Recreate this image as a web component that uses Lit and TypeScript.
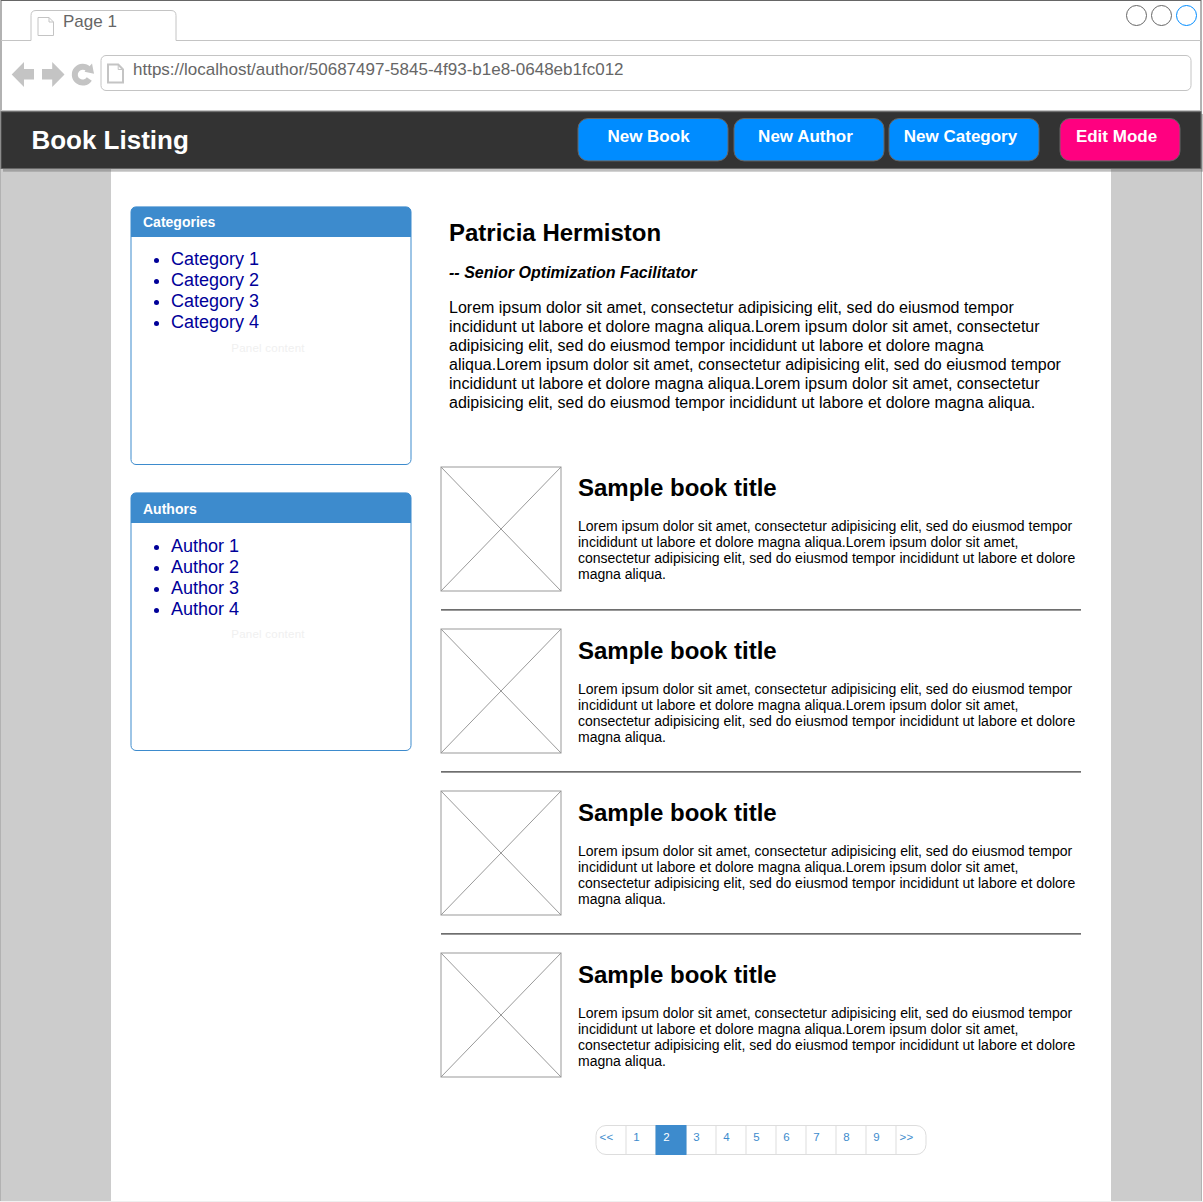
import { LitElement, html, css, svg } from "lit";
import { customElement, property } from "lit/decorators.js";

const LOREM = "Lorem ipsum dolor sit amet, consectetur adipisicing elit, sed do eiusmod tempor incididunt ut labore et dolore magna aliqua.";

/** Browser tab strip and address bar. */
@customElement("browser-chrome")
class BrowserChrome extends LitElement {
  static styles = css`
    :host { display: flex; flex-direction: column; height: 111px; color: #666; font-size: 17px; line-height: 20px; }
    svg { display: block; overflow: visible; flex: none; }
    .tabs { display: flex; height: 41px; position: relative; }
    .outline { position: absolute; left: 0; top: 0; }
    .line { fill: none; stroke: #c4c4c4; }
    .tab { display: flex; width: 176px; padding: 12px 0 0 37px; box-sizing: border-box; }
    .tab span { margin-left: 8px; }
    .tab svg { margin-top: 5px; }
    .windows { margin-left: auto; margin-right: 5px; padding-top: 5px; }
    .bar { display: flex; height: 70px; }
    .nav { margin: 20px 0 0 11px; }
    .solid { fill: #c4c4c4; }
    .field { display: flex; position: relative; margin: 14px 0 0 6px; width: 1092px; height: 37px; }
    .field .doc { margin: 8px 0 0 6px; }
    .field span { margin: 5px 0 0 8px; }
  `;
  render() {
    return html`
      <div class="tabs">
        <svg class="outline" width="1203" height="41">
          <path class="line" d="M1 40.5H31V15.5Q31 10.5 36 10.5H171Q176 10.5 176 15.5V40.5H1201" />
        </svg>
        <div class="tab">
          <svg width="18" height="20"><path class="line" d="M1 .5H12L16.5 5V18.5H1ZM12 .5V5H16.5" /></svg>
          <span>Page 1</span>
        </div>
        <svg class="windows" width="73" height="22" fill="none" stroke="#666">
          <circle cx="11.5" cy="10.5" r="10" /><circle cx="36.5" cy="10.5" r="10" />
          <circle cx="61.5" cy="10.5" r="10" stroke="#008cff" />
        </svg>
      </div>
      <div class="bar">
        <svg class="nav" width="83" height="28">
          <path class="solid" d="M.7 13.5L13 1V8H23V18.5H13V26ZM53.5 13.5L41.2 1V8H31V18.5H41.2V26Z" />
          <path d="M78.3 18A7.9 7.9 0 1 1 77.3 8.1" fill="none" stroke="#c4c4c4" stroke-width="6" />
          <path class="solid" d="M81 2.5L83 12.8L73.5 10.8Z" />
        </svg>
        <div class="field">
          <svg class="outline" width="1092" height="37"><rect class="line" x="1" y=".5" width="1090" height="35" rx="5" /></svg>
          <svg class="doc" width="19" height="21"><path class="line" stroke-width="2" d="M2 1.5H12.2L17 6.5V19.5H2Z" /><path class="line" d="M12.2 1.5V6.5H17" /></svg>
          <span>https://localhost/author/50687497-5845-4f93-b1e8-0648eb1fc012</span>
        </div>
      </div>`;
  }
}

/** Rounded button with its label set above centre. */
@customElement("action-button")
class ActionButton extends LitElement {
  @property() label = "";
  @property() tone = "#008cff";
  @property({ type: Number }) span = 150;
  static styles = css`
    :host { display: block; position: relative; height: 44px; color: #fff; font: bold 17px/20px "Liberation Sans", Arial, sans-serif; text-align: center; }
    svg { position: absolute; left: 0; top: 0; }
    .label { position: relative; padding: 9px 0 0; }
  `;
  render() {
    return html`<svg width=${this.span + 2} height="44">
        <rect x="1" y=".5" width=${this.span} height="42.4" rx="10" fill=${this.tone} stroke="#666" />
      </svg>
      <div class="label">${this.label}</div>`;
  }
}

/** Titled panel holding a bulleted list. */
@customElement("side-panel")
class SidePanel extends LitElement {
  @property() heading = "";
  @property() item = "";
  static styles = css`
    :host { display: block; position: relative; width: 282px; height: 259px; }
    svg { position: absolute; left: 0; top: 0; }
    .inner { position: relative; display: flex; flex-direction: column; height: 150px; }
    .heading { height: 31px; padding: var(--heading-top, 8px) 0 0 13px; box-sizing: border-box; color: #fff; font-weight: bold; font-size: 14px; line-height: 16px; }
    ul { margin: var(--list-top, 12px) 0 0; padding: 0 0 0 41px; color: #000099; font-size: 18px; line-height: 21px; }
    .note { margin-top: auto; padding: 0 6px 1px 0; text-align: center; font-size: 11.5px; letter-spacing: 0.24px; line-height: 14px; color: #f0f0f0; }
  `;
  render() {
    const items = [1, 2, 3, 4].map((n) => `${this.item} ${n}`);
    return html`<svg width="282" height="260">
        <rect x="1" y=".9" width="280" height="257.6" rx="5" fill="#fff" stroke="#3d8bcd" />
        <path d="M1 31V6Q1 1 6 1H276Q281 1 281 6V31Z" fill="#3d8bcd" />
      </svg>
      <div class="inner">
        <div class="heading">${this.heading}</div>
        <ul>${items.map((text) => html`<li>${text}</li>`)}</ul>
        <div class="note">Panel content</div>
      </div>`;
  }
}

/** Cover placeholder with title and summary. */
@customElement("book-row")
class BookRow extends LitElement {
  static styles = css`
    :host { display: flex; height: 126px; }
    svg { flex: none; display: block; }
    .text { margin-left: 16px; width: 505px; padding-top: var(--text-top, 9px); }
    h2 { margin: 0; font-size: 24px; line-height: 28px; }
    p { margin: 16px 0 0; font-size: 14px; line-height: 16px; }
  `;
  render() {
    return html`<svg width="122" height="126" fill="none" stroke="#999">
        <rect x="1" y="1" width="120" height="124" />
        <path d="M1 1L121 125M121 1L1 125" />
      </svg>
      <div class="text"><h2>Sample book title</h2><p>${LOREM.repeat(2)}</p></div>`;
  }
}

@customElement("page-links")
class PageLinks extends LitElement {
  static styles = css`
    :host { display: flex; position: relative; width: 332px; height: 31px; }
    svg { position: absolute; left: 0; top: 0; }
    .cells { position: relative; display: flex; padding-left: 1px; }
    .cell { width: 30px; box-sizing: border-box; padding: 5px 9px 0 0; text-align: center; font-size: 11.5px; letter-spacing: 0.24px; line-height: 14px; color: #3d8bcd; }
    .current { color: #fff; }
  `;
  render() {
    const cells = ["<<", "1", "2", "3", "4", "5", "6", "7", "8", "9", ">>"];
    return html`<svg width="332" height="31" fill="none" stroke="#ddd">
        <rect x="1" y=".5" width="330" height="29" rx="10" />
        ${cells.slice(1).map((_, i) => svg`<path d=${`M${31 + i * 30} .5V29.5`} />`)}
        <rect x="61" y=".5" width="30" height="29" fill="#3d8bcd" stroke="#3d8bcd" />
      </svg>
      <div class="cells">${cells.map((c) => html`<div class=${c === "2" ? "cell current" : "cell"}>${c}</div>`)}</div>`;
  }
}

@customElement("app-root")
class AppRoot extends LitElement {
  static styles = css`
    :host { display: block; width: 1203px; height: 1202px; overflow: hidden; position: relative; background: #fff; font-family: "Liberation Sans", Arial, sans-serif; color: #000; }
    .frame { position: absolute; left: 0; top: 0; }
    .page { position: relative; display: flex; flex-direction: column; }
    header { display: flex; height: 58px; color: #fff; }
    h1 { margin: 14px auto 0 31.4px; font-size: 26px; line-height: 30px; }
    .actions { display: flex; gap: 4px; padding: 7px 22px 0 0; }
    .actions action-button { width: 152px; box-sizing: border-box; padding-right: 7px; }
    .actions .first { padding-right: 9px; }
    .actions .third { margin-left: -1px; }
    .actions .edit { width: 122px; margin-left: 15px; }
    .columns { display: flex; padding-left: 130px; }
    aside { display: flex; flex-direction: column; gap: 27px; padding-top: 37px; width: 282px; }
    .authors { --heading-top: 9px; --list-top: 13px; }
    main { margin-left: 28px; width: 642px; padding-top: 50px; }
    .bio { padding-left: 9px; width: 625px; height: 247px; box-sizing: content-box; }
    .bio h2 { margin: 0; font-size: 24px; line-height: 28px; }
    .role { margin: 16px 0 0; font: italic bold 16px/19px "Liberation Sans", Arial, sans-serif; letter-spacing: 0.02px; }
    .bio p { margin: 16px 0 0; font-size: 16px; line-height: 19px; }
    .opening { --text-top: 8px; }
    .rule { margin: 17px 1px; height: 2px; background: linear-gradient(#6e6e6e 50%, #999 50%); }
    .pager { display: flex; padding: 47px 0 0 155px; }
  `;
  render() {
    return html`
      <svg class="frame" width="1203" height="1202">
        <rect x="1" y=".5" width="1200" height="1200.5" fill="#fff" stroke="#666" />
        <rect x="1" y="111" width="1200" height="1090" fill="#ccc" />
        <rect x="111" y="169" width="1000" height="1032" fill="#fff" />
        <rect x="0" y="1201" width="1203" height="1" fill="#f0f0f0" />
        <path d="M1 110.5H1201" stroke="#c4c4c4" />
        <rect x="3" y="114" width="1200" height="57.7" fill="#666" opacity=".42" />
        <rect x="1" y="111.7" width="1200" height="56.8" fill="#333" stroke="#666" />
      </svg>
      <div class="page">
        <browser-chrome></browser-chrome>
        <header>
          <h1>Book Listing</h1>
          <div class="actions">
            <action-button class="first" label="New Book"></action-button>
            <action-button label="New Author"></action-button>
            <action-button class="third" label="New Category"></action-button>
            <action-button class="edit" label="Edit Mode" tone="#ff0080" span="120"></action-button>
          </div>
        </header>
        <div class="columns">
          <aside>
            <side-panel heading="Categories" item="Category"></side-panel>
            <side-panel class="authors" heading="Authors" item="Author"></side-panel>
          </aside>
          <main>
            <section class="bio">
              <h2>Patricia Hermiston</h2>
              <div class="role">-- Senior Optimization Facilitator</div>
              <p>${LOREM.repeat(4)}</p>
            </section>
            ${[0, 1, 2, 3].map((i) => html`${i ? html`<div class="rule"></div>` : ""}<book-row class=${i ? "" : "opening"}></book-row>`)}
            <div class="pager"><page-links></page-links></div>
          </main>
        </div>
      </div>`;
  }
}
